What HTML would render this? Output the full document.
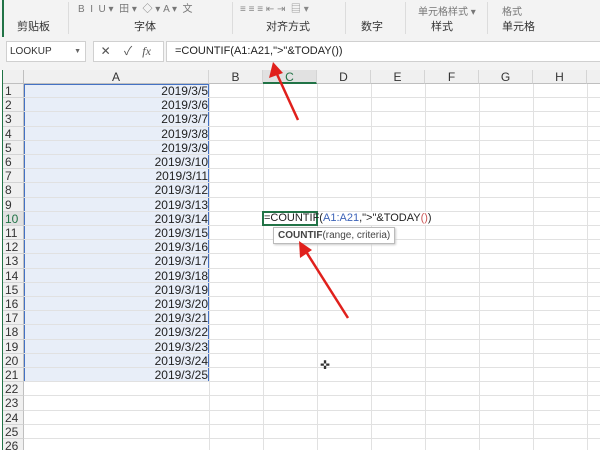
<!DOCTYPE html><html><head><meta charset="utf-8"><style>
html,body{margin:0;width:600px;height:450px;overflow:hidden}
body{background:#fff;font-family:"Liberation Sans","Noto Sans CJK SC",sans-serif;position:relative}
.a{position:absolute}
.rib{left:0;top:0;width:600px;height:37px;background:#f3f3f3;border-bottom:1px solid #d4d4d4}
.lab{font-size:11px;color:#333;top:18px}
.sep{top:2px;width:1px;height:32px;background:#dcdcdc}
.fb{left:0;top:37px;width:600px;height:33px;background:#f3f3f3}
.box{background:#fff;border:1px solid #d0d0d0}
.ch{top:70px;height:14px;background:#f0f0f0;border-right:1px solid #d4d4d4;border-bottom:1px solid #bfbfbf;font-size:12px;color:#333;text-align:center;line-height:14px;box-sizing:border-box}
.rh{left:3px;width:21px;background:#f0f0f0;border-bottom:1px solid #d4d4d4;border-right:1px solid #bfbfbf;font-size:12px;color:#333;box-sizing:border-box;line-height:14px;padding-left:2px}
.hl{left:24px;width:576px;height:1px;background:#e1e1e1}
.vl{top:84px;width:1px;height:366px;background:#e1e1e1}
.d{left:24px;width:184px;text-align:right;font-size:12px;color:#222;line-height:14px}
</style></head><body>
<div class="a rib"></div>
<div class="a" style="left:2px;top:0;width:2px;height:450px;background:#217346"></div>
<div class="a lab" style="left:17px">剪贴板</div>
<div class="a lab" style="left:134px">字体</div>
<div class="a lab" style="left:266px">对齐方式</div>
<div class="a lab" style="left:361px">数字</div>
<div class="a lab" style="left:431px">样式</div>
<div class="a lab" style="left:502px">单元格</div>
<div class="a" style="left:418px;top:3px;font-size:10px;color:#777">单元格样式 ▾</div>
<div class="a" style="left:502px;top:3px;font-size:10px;color:#777">格式</div>
<div class="a" style="left:78px;top:0;font-size:10px;color:#777">B&nbsp; I&nbsp; U ▾ &nbsp;田 ▾&nbsp; ◇ ▾ A ▾&nbsp; 文</div>
<div class="a" style="left:240px;top:0;font-size:10px;color:#888">≡ ≡ ≡ ⇤ ⇥ &nbsp;▤ ▾</div>
<div class="a sep" style="left:68px"></div><div class="a sep" style="left:232px"></div><div class="a sep" style="left:345px"></div><div class="a sep" style="left:405px"></div><div class="a sep" style="left:487px"></div>
<div class="a fb"></div>
<div class="a box" style="left:6px;top:41px;width:75px;height:19px;font-size:10px;line-height:19px;padding-left:3px;color:#333">LOOKUP<span style="position:absolute;right:4px;font-size:7px;color:#666">▼</span></div>
<div class="a box" style="left:93px;top:41px;width:69px;height:19px;font-size:12px;color:#555;line-height:19px">&nbsp;&nbsp;✕&nbsp;&nbsp;&nbsp;&nbsp;✓&nbsp;&nbsp;&nbsp;<i style="font-family:'Liberation Serif'">fx</i></div>
<div class="a box" style="left:166px;top:41px;width:440px;height:19px;font-size:11px;line-height:19px;padding-left:8px;color:#222;border-right:none">=COUNTIF(A1:A21,"&gt;"&amp;TODAY())</div>
<div class="a" style="left:3px;top:70px;width:21px;height:14px;background:#f0f0f0;border-right:1px solid #bfbfbf;border-bottom:1px solid #bfbfbf;box-sizing:border-box"></div>
<div class="a ch" style="left:24px;width:185px">A</div>
<div class="a ch" style="left:209px;width:54px">B</div>
<div class="a ch" style="left:263px;width:54px;background:#e1e1e1;border-bottom:2px solid #217346;color:#217346">C</div>
<div class="a ch" style="left:317px;width:54px">D</div>
<div class="a ch" style="left:371px;width:54px">E</div>
<div class="a ch" style="left:425px;width:54px">F</div>
<div class="a ch" style="left:479px;width:54px">G</div>
<div class="a ch" style="left:533px;width:54px">H</div>
<div class="a ch" style="left:587px;width:20px"></div>
<div class="a" style="left:24px;top:84px;width:185px;height:298px;background:#e8eef8;border:1px solid #4472c4;box-sizing:border-box"></div>
<div class="a vl" style="left:263px"></div><div class="a vl" style="left:317px"></div><div class="a vl" style="left:371px"></div><div class="a vl" style="left:425px"></div><div class="a vl" style="left:479px"></div><div class="a vl" style="left:533px"></div><div class="a vl" style="left:587px"></div>
<div class="a vl" style="left:209px"></div>
<div id="g"></div>
<div class="a" style="left:264px;top:212px;width:166px;height:13px;background:#fff"></div>
<div class="a" style="left:262px;top:211px;width:56px;height:15px;border:2px solid #217346;box-sizing:border-box"></div>
<div class="a" style="left:264px;top:211px;font-size:11px;line-height:15px;color:#222;white-space:nowrap">=COUNTIF(<span style="color:#3d63b8">A1:A21</span>,"&gt;"&amp;TODAY<span style="color:#c55">()</span>)</div>
<div class="a" style="left:273px;top:227px;height:15px;padding:0 4px;border:1px solid #bbb;background:#fff;font-size:10px;line-height:15px;color:#444;box-shadow:1px 1px 2px #ccc"><b>COUNTIF</b>(range, criteria)</div>
<div class="a" style="left:320px;top:358px;font-size:12px;color:#333">✜</div>
<svg class="a" style="left:0;top:0" width="600" height="450"><g stroke="#e0201c" stroke-width="2.5" fill="#e0201c">
<line x1="298" y1="120" x2="276" y2="72"/><polygon points="273,62 269,78 283,73" stroke="none"/>
<line x1="348" y1="318" x2="305" y2="250"/><polygon points="299,241 300,258 312,250" stroke="none"/></g></svg>
<script>
var g=document.getElementById('g'),h='',ds=[5,6,7,8,9,10,11,12,13,14,15,16,17,18,19,20,21,22,23,24,25];
for(var i=0;i<26;i++){var t=84+i*14.2;
h+='<div class="a rh" style="top:'+t+'px;height:14.2px'+(i==9?';background:#e1e1e1;color:#217346':'')+'">'+(i+1)+'</div>';
h+='<div class="a hl" style="top:'+(t+13.2)+'px"></div>';
if(i<21)h+='<div class="a d" style="top:'+t+'px">2019/3/'+ds[i]+'</div>';}
g.innerHTML=h;
</script>
</body></html>
